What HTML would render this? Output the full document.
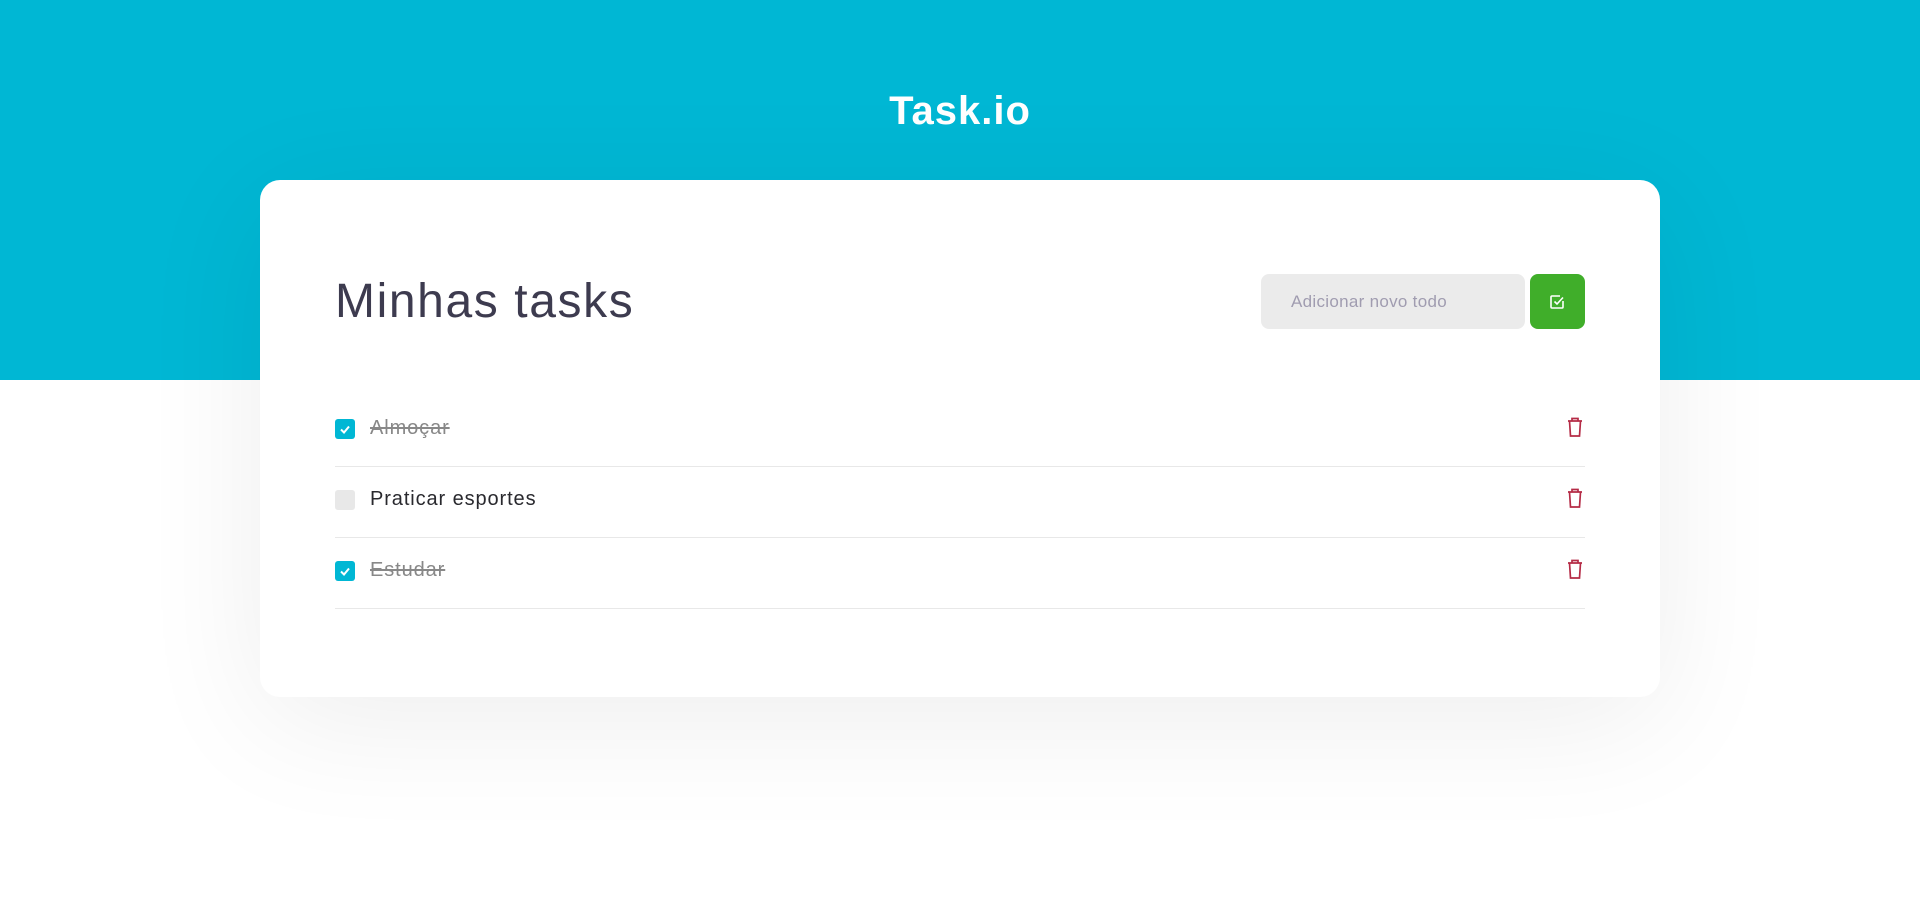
<!DOCTYPE html>
<html><head><meta charset="utf-8"><style>
*{margin:0;padding:0;box-sizing:border-box}
body{width:1920px;height:901px;overflow:hidden;background:#fff;font-family:"Liberation Sans",sans-serif;position:relative}
.hdr{position:absolute;left:0;top:0;width:1920px;height:380px;background:#00b7d4}
.title{position:absolute;top:89px;width:1920px;text-align:center;color:#fff;font-weight:bold;font-size:40px;letter-spacing:1px}
.card{position:absolute;left:260px;top:180px;width:1400px;height:517px;background:#fff;border-radius:20px;box-shadow:0 24px 140px rgba(0,0,0,0.07)}
h1{position:absolute;left:75px;top:94px;font-size:48px;font-weight:500;color:#3d3b4f;letter-spacing:1.6px}
.inp{position:absolute;left:1001px;top:94px;width:264px;height:55px;background:#ebebeb;border-radius:8px;color:#a09cb0;font-size:17px;line-height:55px;padding-left:30px;letter-spacing:0.3px}
.btn{position:absolute;left:1270px;top:94px;width:55px;height:55px;background:#40ae2a;border-radius:8px}
.row{position:absolute;left:75px;width:1250px;height:71px;border-bottom:1.5px solid #e8e8e8}
.cb{position:absolute;left:0;top:23px;width:20px;height:20px;border-radius:3px;background:#e8e8e8}
.cb.on{background:#00b7d4}
.txt{position:absolute;left:35px;top:21px;font-size:20px;color:#29292e;letter-spacing:0.9px}
.done{color:#888;text-decoration:line-through}
.tr{position:absolute;right:0;top:20px}
</style></head><body>
<div class="hdr"></div>
<div class="title">Task.io</div>
<div class="card">
<h1>Minhas tasks</h1>
<div class="inp">Adicionar novo todo</div>
<div class="btn"><svg width="55" height="55" viewBox="0 0 55 55"><path d="M33 27v6a1 1 0 0 1-1 1h-10a1 1 0 0 1-1-1v-10a1 1 0 0 1 1-1h8" fill="none" stroke="#fff" stroke-width="1.6"/><path d="M24.5 27.5l2.5 2.5 6-6.5" fill="none" stroke="#fff" stroke-width="1.6"/></svg></div>
<div class="row" style="top:216px"><div class="cb on"><svg width="20" height="20"><path d="M6 10.5l3 3 5-6" fill="none" stroke="#fff" stroke-width="2"/></svg></div><div class="txt done">Almoçar</div><svg class="tr" width="20" height="22" viewBox="0 0 20 22"><path d="M3 5h14M7 5V2.5h6V5M4.5 5l1 15h9l1-15" fill="none" stroke="#b52b46" stroke-width="1.7"/></svg></div>
<div class="row" style="top:287px"><div class="cb"></div><div class="txt">Praticar esportes</div><svg class="tr" width="20" height="22" viewBox="0 0 20 22"><path d="M3 5h14M7 5V2.5h6V5M4.5 5l1 15h9l1-15" fill="none" stroke="#b52b46" stroke-width="1.7"/></svg></div>
<div class="row" style="top:358px"><div class="cb on"><svg width="20" height="20"><path d="M6 10.5l3 3 5-6" fill="none" stroke="#fff" stroke-width="2"/></svg></div><div class="txt done">Estudar</div><svg class="tr" width="20" height="22" viewBox="0 0 20 22"><path d="M3 5h14M7 5V2.5h6V5M4.5 5l1 15h9l1-15" fill="none" stroke="#b52b46" stroke-width="1.7"/></svg></div>
</div>
</body></html>
